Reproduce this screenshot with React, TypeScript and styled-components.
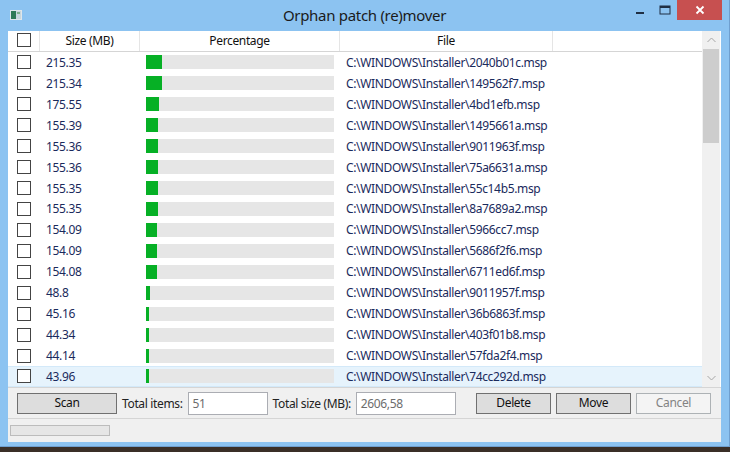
import React from "react";
import styled, { createGlobalStyle } from "styled-components";

const files = [
  { size: "215.35", name: "2040b01c" },
  { size: "215.34", name: "149562f7" },
  { size: "175.55", name: "4bd1efb" },
  { size: "155.39", name: "1495661a" },
  { size: "155.36", name: "9011963f" },
  { size: "155.36", name: "75a6631a" },
  { size: "155.35", name: "55c14b5" },
  { size: "155.35", name: "8a7689a2" },
  { size: "154.09", name: "5966cc7" },
  { size: "154.09", name: "5686f2f6" },
  { size: "154.08", name: "6711ed6f" },
  { size: "48.8", name: "9011957f" },
  { size: "45.16", name: "36b6863f" },
  { size: "44.34", name: "403f01b8" },
  { size: "44.14", name: "57fda2f4" },
  { size: "43.96", name: "74cc292d" },
];

const GlobalStyle = createGlobalStyle`
  html, body {
    margin: 0;
    padding: 0;
    background: #3a2f27;
    overflow: hidden;
  }
  * { box-sizing: border-box; }
`;

const Window = styled.div`
  width: 730px;
  height: 447px;
  background: #8cc3f1;
  border-right: 1px solid #6f9fcf;
  border-bottom: 1px solid #6f9fcf;
  display: flex;
  flex-direction: column;
  font-family: "Noto Sans", "Open Sans", sans-serif;
  letter-spacing: -0.35px;
`;

const TitleBar = styled.div`
  height: 31px;
  display: flex;
  align-items: flex-start;
  position: relative;
`;

const AppIcon = styled.svg`
  margin: 10px 0 0 10px;
`;

const Title = styled.div`
  position: absolute;
  left: 0;
  right: 0;
  top: 5px;
  text-align: center;
  font-size: 15px;
  color: #1b1b1b;
  letter-spacing: -0.3px;
`;

const Controls = styled.div`
  margin-left: auto;
  margin-right: 7px;
  display: flex;
  align-items: flex-start;
  position: relative;
`;

const CtrlButton = styled.div<{ $close?: boolean }>`
  width: ${(p) => (p.$close ? "45px" : "25px")};
  height: 20px;
  background: ${(p) => (p.$close ? "#c75050" : "transparent")};
  display: flex;
  align-items: center;
  justify-content: center;
`;

const Client = styled.div`
  margin: 0 8px 0 8px;
  height: 411px;
  background: #f0f0f0;
  display: flex;
  flex-direction: column;
`;

const ListArea = styled.div`
  height: 357px;
  background: #fff;
  display: flex;
  border-bottom: 1px solid #d5d5d5;
`;

const ListBody = styled.div`
  flex: 1;
  display: flex;
  flex-direction: column;
`;

const Grid = "32px 100px 200px 213px 1fr";

const HeaderRow = styled.div`
  height: 21px;
  display: grid;
  grid-template-columns: ${Grid};
  border-bottom: 1px solid #d5d5d5;
  font-size: 12px;
  color: #111;
`;

const HeaderCell = styled.div`
  border-right: 1px solid #e5e5e5;
  display: flex;
  align-items: center;
  justify-content: center;
  padding-bottom: 1px;
  &:last-child { border-right: none; }
`;

const Row = styled.div<{ $selected?: boolean }>`
  height: 21px;
  display: grid;
  grid-template-columns: ${Grid};
  align-items: center;
  font-size: 12px;
  color: #1a2a5c;
  background: ${(p) => (p.$selected ? "#e6f3fc" : "transparent")};
  box-shadow: ${(p) => (p.$selected ? "inset 0 1px 0 #d3e9f9, inset 0 -1px 0 #d3e9f9" : "none")};
`;

const CheckCell = styled.div`
  display: flex;
  justify-content: center;
  padding-right: 1px;
`;

const Check = styled.div`
  width: 14px;
  height: 14px;
  background: #fff;
  border: 1px solid #444;
`;

const SizeCell = styled.div`
  padding-left: 6px;
`;

const Track = styled.div`
  margin-left: 6px;
  width: 188px;
  height: 14px;
  background: #e6e6e6;
`;

const Fill = styled.div`
  height: 100%;
  background: #06b025;
`;

const FileCell = styled.div`
  padding-left: 6px;
  white-space: nowrap;
`;

const ScrollBar = styled.div`
  width: 18px;
  margin-right: 1px;
  background: #f0f0f0;
  display: flex;
  flex-direction: column;
`;

const Arrow = styled.div`
  height: 18px;
  display: flex;
  align-items: center;
  justify-content: center;
`;

const Thumb = styled.div`
  height: 94px;
  margin: 0 1px 0 1px;
  background: #cdcdcd;
`;

const Spacer = styled.div`
  flex: 1;
`;

const Toolbar = styled.div`
  height: 31px;
  display: flex;
  align-items: center;
  padding: 0 10px 0 9px;
  border-bottom: 1px solid #d5d5d5;
  font-size: 12px;
  color: #222;
`;

const Button = styled.div<{ $width: number; $disabled?: boolean; $push?: boolean }>`
  width: ${(p) => p.$width}px;
  height: 21px;
  margin-left: ${(p) => (p.$push ? "auto" : "5px")};
  display: flex;
  align-items: center;
  justify-content: center;
  background: ${(p) => (p.$disabled ? "#f4f4f4" : "#dddddd")};
  border: 1px solid ${(p) => (p.$disabled ? "#adb2b5" : "#707070")};
  color: ${(p) => (p.$disabled ? "#838383" : "#111")};
  padding-bottom: 1px;
  &:first-child { margin-left: 0; }
`;

const Label = styled.span`
  margin-left: 5px;
  margin-right: 5px;
  color: #222;
`;

const TextBox = styled.div<{ $width: number }>`
  width: ${(p) => p.$width}px;
  height: 23px;
  border: 1px solid #abadb3;
  background: #fff;
  color: #6d6d6d;
  padding: 2px 0 0 4px;
`;

const StatusBar = styled.div`
  flex: 1;
  display: flex;
  align-items: flex-start;
  padding: 6px 0 0 2px;
`;

const Progress = styled.div`
  width: 100px;
  height: 11px;
  border: 1px solid #bcbcbc;
  background: #e6e6e6;
`;

export default function App() {
  return (
    <>
      <GlobalStyle />
      <Window>
        <TitleBar>
          <AppIcon width="12" height="10" viewBox="0 0 12 10">
            <rect x="0" y="0" width="12" height="10" fill="#dfe6ea" />
            <rect x="1" y="1" width="5" height="8" fill="#2f7a55" />
            <rect x="6" y="1" width="5" height="8" fill="#c9d6dc" />
            <rect x="7" y="2" width="3" height="2" fill="#7fb08c" />
          </AppIcon>
          <Title>Orphan patch (re)mover</Title>
          <Controls>
            <CtrlButton>
              <svg width="10" height="10" viewBox="0 0 10 10">
                <rect x="1" y="7" width="8" height="2" fill="#1f2f44" />
              </svg>
            </CtrlButton>
            <CtrlButton>
              <svg width="12" height="10" viewBox="0 0 12 10">
                <rect x="1" y="1" width="10" height="8" fill="none" stroke="#1f2f44" strokeWidth="1" />
                <rect x="1" y="1" width="10" height="2" fill="#1f2f44" />
              </svg>
            </CtrlButton>
            <CtrlButton $close>
              <svg width="10" height="10" viewBox="0 0 10 10">
                <path d="M1.5 1.5 L8.5 8.5 M8.5 1.5 L1.5 8.5" stroke="#fff" strokeWidth="1.8" />
              </svg>
            </CtrlButton>
          </Controls>
        </TitleBar>
        <Client>
          <ListArea>
            <ListBody>
              <HeaderRow>
                <HeaderCell>
                  <Check />
                </HeaderCell>
                <HeaderCell>Size (MB)</HeaderCell>
                <HeaderCell>Percentage</HeaderCell>
                <HeaderCell>File</HeaderCell>
                <HeaderCell />
              </HeaderRow>
              {files.map((f, i) => (
                <Row key={f.name} $selected={i === files.length - 1}>
                  <CheckCell>
                    <Check />
                  </CheckCell>
                  <SizeCell>{f.size}</SizeCell>
                  <Track>
                    <Fill style={{ width: `${Math.round(parseFloat(f.size) * 0.0745)}px` }} />
                  </Track>
                  <FileCell>C:\WINDOWS\Installer\{f.name}.msp</FileCell>
                  <div />
                </Row>
              ))}
            </ListBody>
            <ScrollBar>
              <Arrow>
                <svg width="9" height="6" viewBox="0 0 9 6">
                  <path d="M0.5 5 L4.5 1 L8.5 5" fill="none" stroke="#a6a6a6" strokeWidth="1" />
                </svg>
              </Arrow>
              <Thumb />
              <Spacer />
              <Arrow>
                <svg width="9" height="6" viewBox="0 0 9 6">
                  <path d="M0.5 1 L4.5 5 L8.5 1" fill="none" stroke="#a6a6a6" strokeWidth="1" />
                </svg>
              </Arrow>
            </ScrollBar>
          </ListArea>
          <Toolbar>
            <Button $width={100}>Scan</Button>
            <Label>Total items:</Label>
            <TextBox $width={80}>51</TextBox>
            <Label>Total size (MB):</Label>
            <TextBox $width={100}>2606,58</TextBox>
            <Button $width={75} $push>Delete</Button>
            <Button $width={75}>Move</Button>
            <Button $width={75} $disabled>Cancel</Button>
          </Toolbar>
          <StatusBar>
            <Progress />
          </StatusBar>
        </Client>
      </Window>
    </>
  );
}
